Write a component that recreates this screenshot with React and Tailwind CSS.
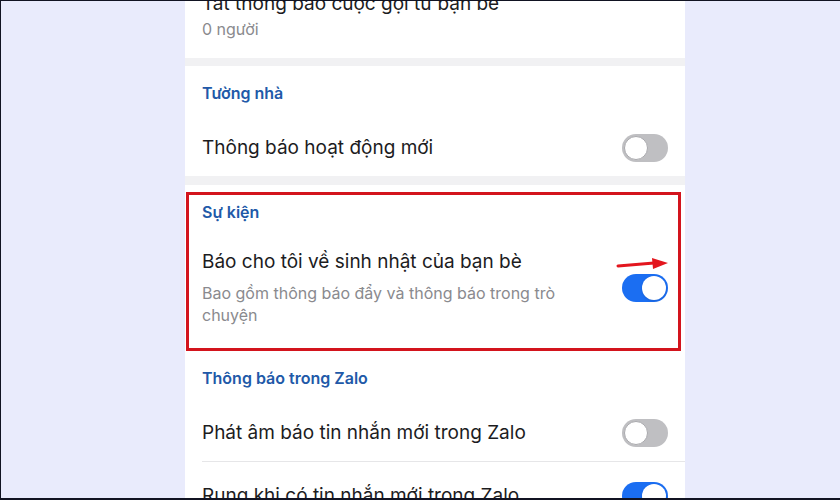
const font = { fontFamily: 'Inter, "Noto Sans", sans-serif' }

function Toggle({ on }) {
  return on ? (
    <div className="flex h-[28px] w-[46px] shrink-0 items-center justify-end rounded-full bg-[#1b6ef2] p-[2px]">
      <div className="h-[24px] w-[24px] rounded-full bg-white shadow-sm" />
    </div>
  ) : (
    <div className="flex h-[28px] w-[46px] shrink-0 items-center rounded-full bg-[#bfbfc2] p-[2px]">
      <div className="h-[24px] w-[24px] rounded-full border border-[#a9a9ad] bg-white" />
    </div>
  )
}

function Heading({ children }) {
  return (
    <div className="h-[54px] px-[17px] pt-[16px]">
      <div className="text-[16px] font-semibold leading-[22px] text-[#2159a8]">{children}</div>
    </div>
  )
}

function Row({ title, on }) {
  return (
    <div className="flex h-[56px] items-center justify-between pl-[17px] pr-[17px]">
      <div className="text-[19px] leading-[24px] text-[#1c1c1e]">{title}</div>
      <Toggle on={on} />
    </div>
  )
}

const Gap = ({ h }) => <div className={h + ' bg-[#f1f1f3]'} />

export default function App() {
  return (
    <div
      className="relative h-[500px] w-[840px] overflow-hidden border-t border-b-2 border-l border-[#111322] bg-[#e9ebfc]"
      style={font}
    >
      <div className="ml-[184px] w-[500px]">
        {/* top, cut off */}
        <div className="flex h-[57px] flex-col justify-end bg-white px-[17px] pb-[18px]">
          <div className="mb-[2px] text-[19px] leading-[24px] text-[#1c1c1e]">Tắt thông báo cuộc gọi từ bạn bè</div>
          <div className="text-[16px] leading-[22px] text-[#8a8a8e]">0 người</div>
        </div>
        <Gap h="h-[8px]" />

        <div className="bg-white">
          <Heading>Tường nhà</Heading>
          <Row title="Thông báo hoạt động mới" on={false} />
        </div>
        <Gap h="h-[9px]" />

        <div className="bg-white">
          <Heading>Sự kiện</Heading>
          <div className="flex items-center justify-between px-[17px] pb-[25px] pt-[11px]">
            <div>
              <div className="text-[19px] leading-[24px] text-[#1c1c1e]">Báo cho tôi về sinh nhật của bạn bè</div>
              <div className="mt-[8px] w-[380px] text-[16px] leading-[22px] text-[#8a8a8e]">
                Bao gồm thông báo đẩy và thông báo trong trò chuyện
              </div>
            </div>
            <Toggle on />
          </div>
        </div>

        <div className="bg-white">
          <Heading>Thông báo trong Zalo</Heading>
          <Row title="Phát âm báo tin nhắn mới trong Zalo" on={false} />
          <div className="ml-[17px] h-px bg-[#e6e6e8]" />
          <div className="flex h-[62px] items-center justify-between pl-[17px] pr-[17px] pt-[6px]">
            <div className="text-[19px] leading-[24px] text-[#1c1c1e]">Rung khi có tin nhắn mới trong Zalo</div>
            <Toggle on />
          </div>
        </div>
      </div>

      {/* annotation */}
      <div className="absolute left-[185px] top-[191px] h-[159px] w-[495px] border-[3px] border-[#d3141d]" />
      <svg className="absolute left-[615px] top-[256px]" width="54" height="14" viewBox="0 0 54 14">
        <path d="M2 9 L38 6" stroke="#e3161e" strokeWidth="3" strokeLinecap="round" />
        <path d="M36 1 L52 6 L37 12 Z" fill="#e3161e" />
      </svg>
    </div>
  )
}
